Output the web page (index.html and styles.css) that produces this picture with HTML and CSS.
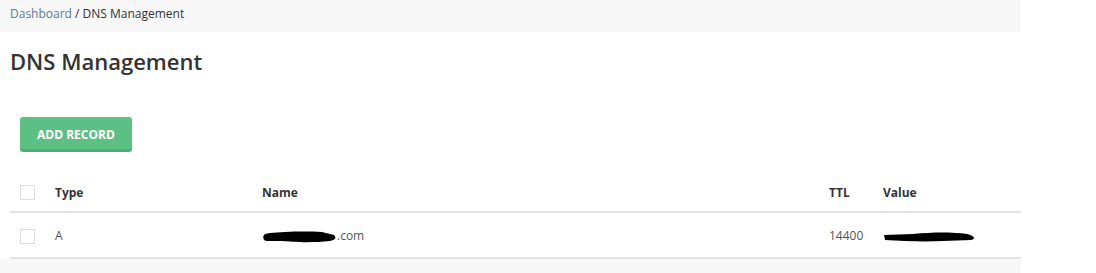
FILE: index.html
```html
<!DOCTYPE html>
<html lang="en">
<head>
	<meta charset="UTF-8">
	<title>DNS Management</title>
	<link rel="stylesheet" href="styles.css">
</head>
<body>
	<div class="page">
		<div class="breadcrumb">
			<a href="#">Dashboard</a> / DNS Management
		</div>
		<h1>DNS Management</h1>
		<div class="actions">
			<button class="btn-add">ADD RECORD</button>
		</div>
		<table class="records">
			<thead>
				<tr>
					<th class="col-check"><span class="check"></span></th>
					<th class="col-type">Type</th>
					<th class="col-name">Name</th>
					<th class="col-ttl">TTL</th>
					<th class="col-value">Value</th>
				</tr>
			</thead>
			<tbody>
				<tr>
					<td class="col-check"><span class="check"></span></td>
					<td>A</td>
					<td><span class="masked">
						<svg width="75" height="16" viewBox="0 0 75 16"><path d="M3 5 C0 7 1 12 5 12 L20 12 C30 13 50 14 68 12 C73 11 75 9 72 6 L60 3 C40 2 20 3 8 4 Z" fill="#000"/></svg>
					</span>.com</td>
					<td>14400</td>
					<td><span class="masked">
						<svg width="94" height="14" viewBox="0 0 94 14"><path d="M1 5 L30 4 C50 2 70 2 84 4 C92 6 93 9 88 10 L60 11 C40 12 20 11 2 10 Z" fill="#000"/></svg>
					</span></td>
				</tr>
			</tbody>
		</table>
		<div class="footer-band"></div>
	</div>
</body>
</html>
```

FILE: styles.css
```css
* {
	margin: 0;
	padding: 0;
	box-sizing: border-box;
}
body {
	font: normal 12px/1.5 "Open Sans", "Noto Sans", sans-serif;
	color: #333;
	background: #fff;
}
.page {
	width: 1021px;
}
.breadcrumb {
	height: 32px;
	line-height: 28px;
	padding: 0 10px;
	background: #f7f7f7;
	font-size: 12px;
	color: #333;
}
.breadcrumb a {
	color: #5b7a93;
	text-decoration: none;
}
h1 {
	padding: 14px 10px 0;
	font-size: 22px;
	font-weight: 600;
	line-height: 30px;
	color: #333;
}
.actions {
	padding: 41px 20px 0;
}
.btn-add {
	height: 35px;
	padding: 2px 17px 0;
	font: bold 12px "Open Sans", sans-serif;
	color: #fff;
	background: #5cc084;
	border: none;
	border-bottom: 3px solid #4fb074;
	border-radius: 3px;
}
.records {
	width: 1011px;
	margin: 27px 0 0 10px;
	border-collapse: collapse;
}
.records th {
	height: 33px;
	text-align: left;
	font-weight: bold;
	font-size: 12px;
	color: #333;
	border-bottom: 2px solid #e3e3e3;
	vertical-align: middle;
	padding-bottom: 5px;
}
.records td {
	height: 46px;
	color: #555;
	font-size: 12px;
	border-bottom: 2px solid #e3e3e3;
	vertical-align: middle;
	padding-top: 2px;
}
.col-check {
	width: 45px;
	padding-left: 10px;
}
.col-type {
	width: 207px;
}
.col-name {
	width: 567px;
}
.col-ttl {
	width: 54px;
}
.check {
	display: block;
	width: 15px;
	height: 15px;
	border: 1px solid #ddd;
	background: #fff;
}
.masked {
	display: inline-block;
	vertical-align: middle;
	line-height: 0;
}
.masked svg {
	display: block;
}
.footer-band {
	height: 20px;
	background: #f7f7f7;
}
```
